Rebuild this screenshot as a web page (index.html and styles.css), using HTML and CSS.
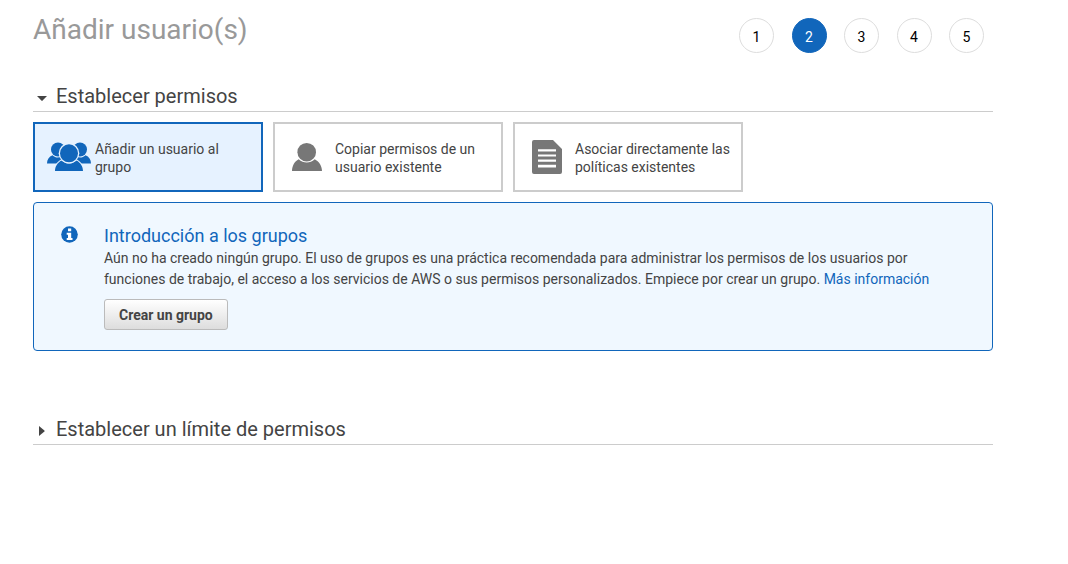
FILE: index.html
```html
<!DOCTYPE html>
<html lang="es">
<head>
<meta charset="utf-8">
<meta name="viewport" content="width=device-width, initial-scale=1">
<title>Añadir usuario(s)</title>
<link rel="stylesheet" href="styles.css">
</head>
<body>
<main class="page">
  <header class="header">
    <h1 class="title">Añadir usuario(s)</h1>
    <ol class="steps">
      <li class="step">1</li>
      <li class="step step-current" aria-current="step">2</li>
      <li class="step">3</li>
      <li class="step">4</li>
      <li class="step">5</li>
    </ol>
  </header>

  <section class="permissions">
    <h2 class="section-heading">
      <button class="section-toggle" type="button" aria-expanded="true">
        <svg class="caret" viewBox="0 0 10 10" aria-hidden="true"><path d="M0 3h10L5.600 7.600Q5 8.200 4.400 7.600Z"/></svg>
        <span>Establecer permisos</span>
      </button>
    </h2>
    <div class="choices">
      <button class="choice choice-selected" type="button" aria-pressed="true">
        <svg class="choice-icon" viewBox="0 0 44 30" aria-hidden="true">
          <circle cx="11" cy="7.500" r="7"/><circle cx="33" cy="7.500" r="7"/>
          <path d="M0 21.500C0 17.500 2 14.500 5.500 13.200C8.500 16.200 12 16 14 14.500L20 21.500ZM44 21.500C44 17.500 42 14.500 38.500 13.200C35.500 16.200 32 16 30 14.500L24 21.500Z"/>
          <path class="icon-gap" d="M6.800 30C6.800 24.500 9.500 19.800 14.200 17.500L22 14L29.800 17.500C34.500 19.800 37.200 24.500 37.200 30Z"/>
          <path d="M8 29C8 24.500 10.500 20.500 14.500 18.400C19 22.500 25 22.500 29.500 18.400C33.500 20.500 36 24.500 36 29Z"/>
          <circle class="icon-gap" cx="22" cy="11.300" r="10.300"/>
          <circle cx="22" cy="11.300" r="9"/>
        </svg>
        <span class="choice-label">Añadir un usuario al grupo</span>
      </button>
      <button class="choice" type="button" aria-pressed="false">
        <svg class="choice-icon" viewBox="0 0 44 30" aria-hidden="true">
          <circle cx="19.700" cy="10.200" r="9.300"/>
          <path d="M5 29C5 24 7.500 19.300 11.700 17.200C16.500 21.500 23 21.500 27.700 17.200C32 19.300 35 24 35 29Z"/>
        </svg>
        <span class="choice-label">Copiar permisos de un usuario existente</span>
      </button>
      <button class="choice" type="button" aria-pressed="false">
        <svg class="choice-icon choice-icon-doc" viewBox="0 0 44 34" aria-hidden="true">
          <path fill-rule="evenodd" d="M7 0H26L35 9V32Q35 34 33 34H7Q5 34 5 32V2Q5 0 7 0ZM11 9.200V11.400H29V9.200ZM11 14.400V16.600H29V14.400ZM11 19.600V21.800H29V19.600ZM11 24.800V27.600H29V24.800Z"/>
        </svg>
        <span class="choice-label">Asociar directamente las políticas existentes</span>
      </button>
    </div>

    <div class="notice">
      <svg class="notice-icon" viewBox="0 0 17 17" aria-hidden="true">
        <circle cx="8.500" cy="8.500" r="8.300"/>
        <path class="notice-mark" d="M7 2.500H10.200V5.200H7ZM5.700 6.700H10.200V12H11.500V14H5.700V12H7V8.700H5.700Z"/>
      </svg>
      <div class="notice-body">
        <h3 class="notice-title">Introducción a los grupos</h3>
        <p class="notice-text">Aún no ha creado ningún grupo. El uso de grupos es una práctica recomendada para administrar los permisos de los usuarios por funciones de trabajo, el acceso a los servicios de AWS o sus permisos personalizados. Empiece por crear un grupo. <a class="link" href="#">Más información</a></p>
        <button class="create-button" type="button">Crear un grupo</button>
      </div>
    </div>
  </section>

  <section>
    <h2 class="section-heading">
      <button class="section-toggle" type="button" aria-expanded="false">
        <svg class="caret" viewBox="0 0 10 10" aria-hidden="true"><path d="M2 0L7.400 4.400Q8 5 7.400 5.600L2 10Z"/></svg>
        <span>Establecer un límite de permisos</span>
      </button>
    </h2>
  </section>
</main>
</body>
</html>
```
FILE: styles.css
```css
* {
  box-sizing: border-box;
}

body {
  margin: 0;
  background: #fff;
  color: #444;
  font: 14px/21px Roboto, "Liberation Sans", sans-serif;
}

button {
  font: inherit;
  color: inherit;
  cursor: pointer;
}

h1, h2, h3, p, ol {
  margin: 0;
  padding: 0;
  font-weight: 400;
}

.page {
  max-width: 1068px;
  padding: 12px 75px 24px 33px;
}

.header {
  display: flex;
  justify-content: space-between;
  align-items: flex-start;
  padding-right: 9px;
  margin-bottom: 28px;
}

.title {
  color: #999;
  font-size: 28px;
  line-height: 36px;
}

.steps {
  display: flex;
  justify-content: space-between;
  width: 245px;
  padding-top: 6px;
  list-style: none;
}

.step {
  width: 35px;
  height: 35px;
  padding-top: 2px;
  border: 1px solid #ddd;
  border-radius: 50%;
  color: #000;
  line-height: 33px;
  text-align: center;
}

.step-current {
  background: #1166bb;
  border-color: #1166bb;
  color: #fff;
}

.section-heading {
  border-bottom: 1px solid #ccc;
  font-size: 20px;
  line-height: 30px;
}

.section-toggle {
  display: flex;
  align-items: center;
  gap: 9px;
  padding: 0 0 0 4px;
  border: 0;
  background: none;
}

.caret {
  width: 10px;
  height: 10px;
  margin-top: 4px;
  fill: #444;
}

.permissions {
  margin-bottom: 63px;
}

.choices {
  display: flex;
  flex-wrap: wrap;
  gap: 10px;
  padding: 10px 0;
}

.choice {
  display: flex;
  align-items: center;
  gap: 4px;
  width: 230px;
  min-height: 70px;
  padding: 0 8px 0 12px;
  border: 2px solid #ccc;
  background: #fff;
  text-align: left;
  line-height: 18px;
}

.choice-label {
  padding-top: 2px;
}

.choice-selected {
  border-color: #1166bb;
  background: #e6f2ff;
}

.choice-icon {
  flex: none;
  width: 44px;
  height: 30px;
  fill: #777;
}

.choice-icon-doc {
  height: 34px;
}

.choice-selected .choice-icon {
  fill: #1166bb;
}

.icon-gap {
  fill: #e6f2ff;
}

.notice {
  display: flex;
  gap: 26px;
  padding: 22px 40px 20px 27px;
  border: 1px solid #1166bb;
  border-radius: 4px;
  background: #f0f8ff;
}

.notice-icon {
  flex: none;
  width: 17px;
  height: 17px;
  margin-top: 1px;
  fill: #1166bb;
}

.notice-mark {
  fill: #fff;
}

.notice-title {
  margin-bottom: 1px;
  color: #1166bb;
  font-size: 18px;
  line-height: 22px;
}

.link {
  color: #1166bb;
  text-decoration: none;
}

.create-button {
  display: block;
  margin-top: 9px;
  padding: 5px 14px 3px;
  border: 1px solid #bbb;
  border-radius: 3px;
  background: linear-gradient(#fff, #ddd);
  font-weight: 700;
}
```
